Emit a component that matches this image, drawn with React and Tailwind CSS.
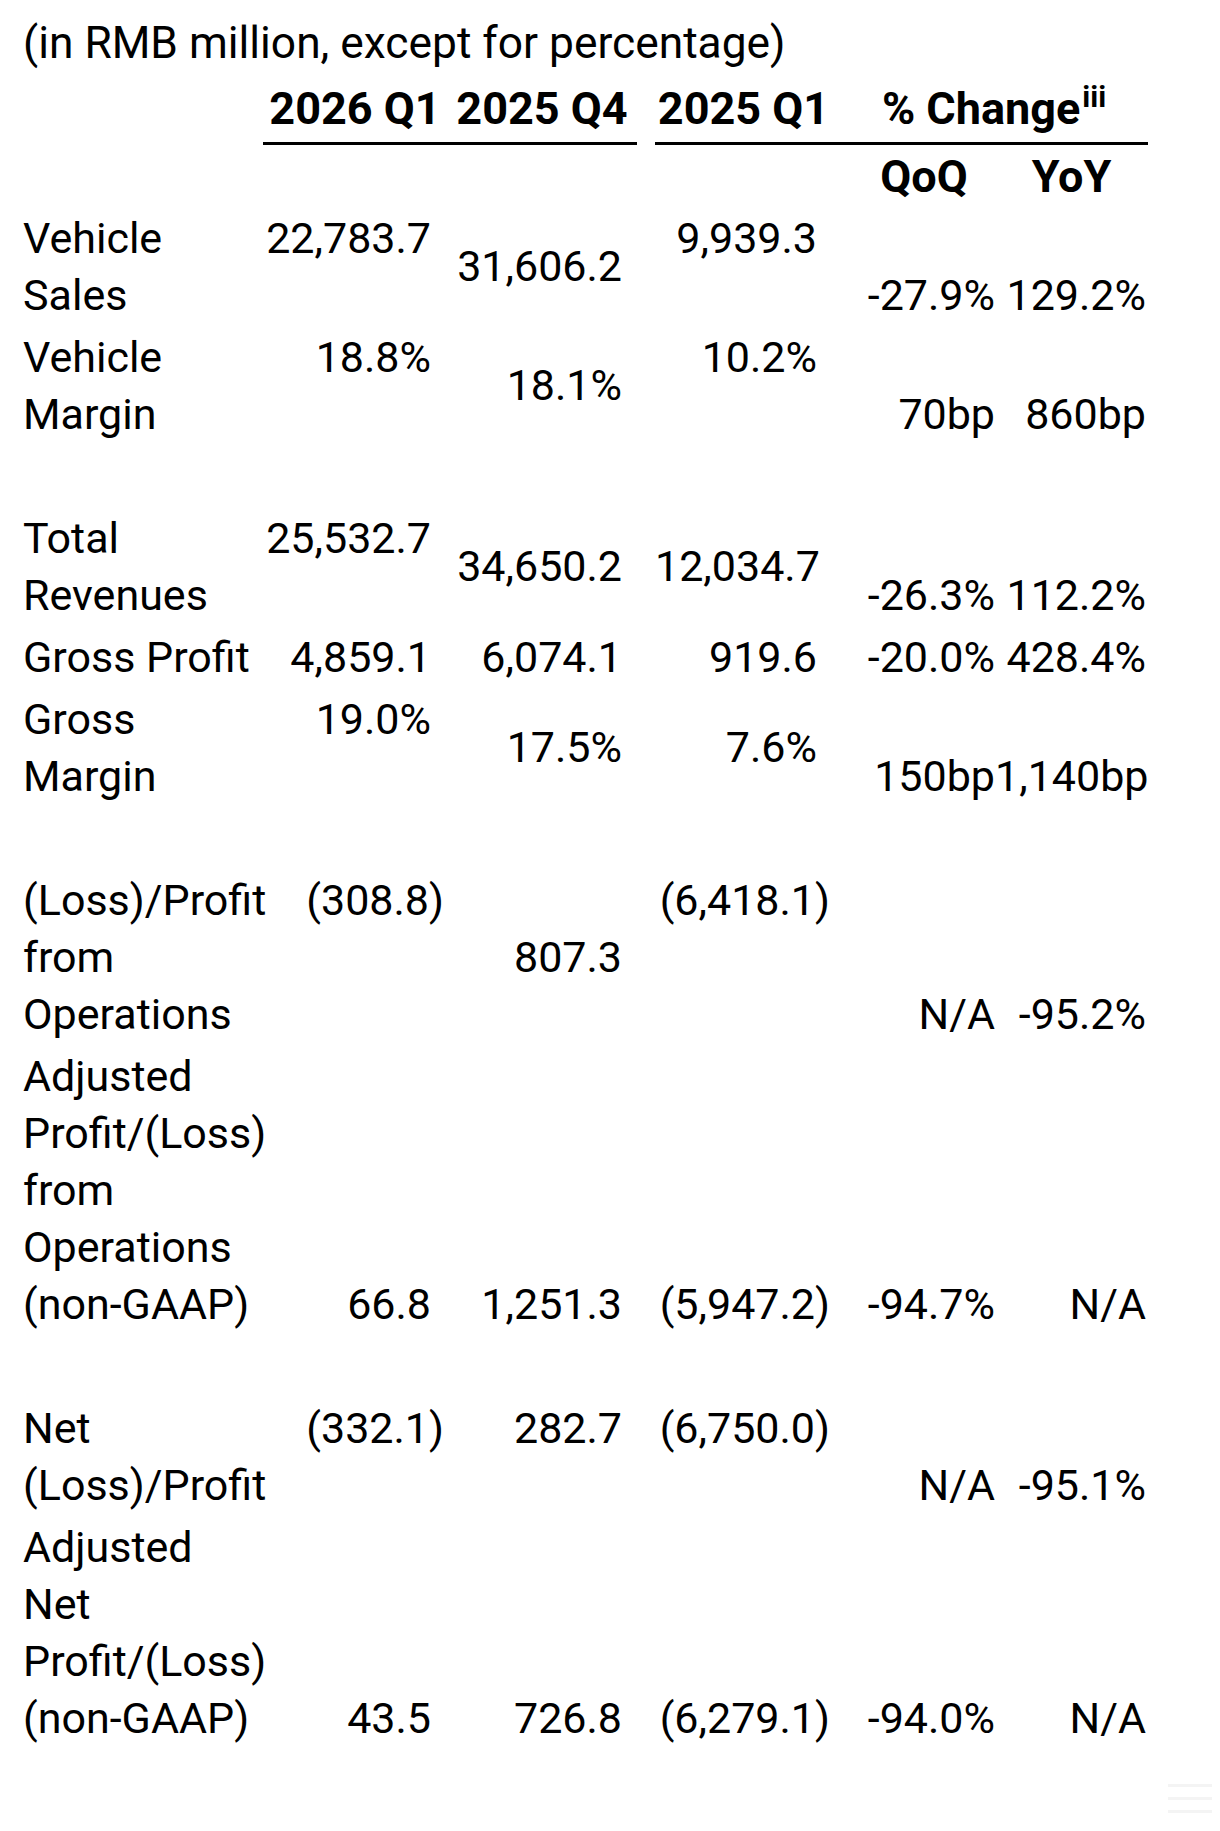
import React from "react";

const GRID = "grid grid-cols-[240px_184px_190px_18px_177px_163px_153px]";
const PADS = ["pr-[16px]", "pr-[15px]", "", "pr-[15px]", "pr-0", "pr-[2px]"];
const ALIGN = { t: "justify-start", m: "justify-center", b: "justify-end" };

function Val({ v }) {
  if (v.endsWith(")")) {
    return (
      <span>
        {v.slice(0, -1)}
        <span className="mr-[-13px]">)</span>
      </span>
    );
  }
  return <span>{v}</span>;
}

function Row({ label, cells }) {
  return (
    <div className={`${GRID} pt-[2.5px] pb-[2.5px] text-[43px] leading-[57px]`}>
      <div className="flex flex-col whitespace-nowrap">
        {label.map((l, i) => (
          <div key={i}>{l}</div>
        ))}
      </div>
      {[0, 1, 2, 3, 4, 5].map((ci) => {
        if (ci === 2) return <div key={ci} />;
        const idx = ci > 2 ? ci - 1 : ci;
        const c = cells[idx];
        return (
          <div
            key={ci}
            className={`flex flex-col text-right whitespace-nowrap ${PADS[ci]} ${ALIGN[c ? c[1] || "t" : "t"]}`}
          >
            {c ? <Val v={c[0]} /> : null}
          </div>
        );
      })}
    </div>
  );
}

function Blank() {
  return (
    <div className={`${GRID} pt-[2.5px] pb-[2.5px] text-[43px] leading-[57px]`}>
      <div>&nbsp;</div>
    </div>
  );
}

export default function App() {
  return (
    <div className="relative min-h-[1831px] w-[1220px] bg-white text-black font-[Roboto,sans-serif] pt-[15px] pl-[23px]">
      <div className="text-[44.3px] leading-[57px] whitespace-nowrap">
        (in RMB million, except for percentage)
      </div>

      <div className={`${GRID} mt-[8px] text-[45px] font-bold leading-[57px] whitespace-nowrap`}>
        <div />
        <div className="text-center pb-[0px] border-b-[3px] border-black">2026 Q1</div>
        <div className="text-center pb-[0px] border-b-[3px] border-black">2025 Q4</div>
        <div />
        <div className="text-center pb-[0px] border-b-[3px] border-black">2025 Q1</div>
        <div className="col-span-2 text-center pb-[0px] border-b-[3px] border-black pl-[8px]">
          % Change<span className="relative top-[-17px] text-[30px] ml-[2px]">iii</span>
        </div>
      </div>

      <div className={`${GRID} pt-[3px] pb-[2px] text-[45px] font-bold leading-[57px] whitespace-nowrap`}>
        <div />
        <div />
        <div />
        <div />
        <div />
        <div className="text-center pl-[21px]">QoQ</div>
        <div className="text-center">YoY</div>
      </div>

      <Row
        label={["Vehicle", "Sales"]}
        cells={[["22,783.7", "t"], ["31,606.2", "m"], ["9,939.3", "t"], ["-27.9%", "b"], ["129.2%", "b"]]}
      />
      <Row
        label={["Vehicle", "Margin"]}
        cells={[["18.8%", "t"], ["18.1%", "m"], ["10.2%", "t"], ["70bp", "b"], ["860bp", "b"]]}
      />
      <Blank />
      <Row
        label={["Total", "Revenues"]}
        cells={[["25,532.7", "t"], ["34,650.2", "m"], ["12,034.7", "m"], ["-26.3%", "b"], ["112.2%", "b"]]}
      />
      <Row
        label={["Gross Profit"]}
        cells={[["4,859.1", "t"], ["6,074.1", "t"], ["919.6", "t"], ["-20.0%", "t"], ["428.4%", "t"]]}
      />
      <Row
        label={["Gross", "Margin"]}
        cells={[["19.0%", "t"], ["17.5%", "m"], ["7.6%", "m"], ["150bp", "b"], ["1,140bp", "b"]]}
      />
      <Blank />
      <Row
        label={["(Loss)/Profit", "from", "Operations"]}
        cells={[["(308.8)", "t"], ["807.3", "m"], ["(6,418.1)", "t"], ["N/A", "b"], ["-95.2%", "b"]]}
      />
      <Row
        label={["Adjusted", "Profit/(Loss)", "from", "Operations", "(non-GAAP)"]}
        cells={[["66.8", "b"], ["1,251.3", "b"], ["(5,947.2)", "b"], ["-94.7%", "b"], ["N/A", "b"]]}
      />
      <Blank />
      <Row
        label={["Net", "(Loss)/Profit"]}
        cells={[["(332.1)", "t"], ["282.7", "t"], ["(6,750.0)", "t"], ["N/A", "b"], ["-95.1%", "b"]]}
      />
      <Row
        label={["Adjusted", "Net", "Profit/(Loss)", "(non-GAAP)"]}
        cells={[["43.5", "b"], ["726.8", "b"], ["(6,279.1)", "b"], ["-94.0%", "b"], ["N/A", "b"]]}
      />

      <div className="absolute left-[1168px] top-[1784px] w-[44px] flex flex-col gap-[10px] opacity-60">
        <div className="h-[3px] bg-[#eeeeee]" />
        <div className="h-[3px] bg-[#eeeeee]" />
        <div className="h-[3px] bg-[#eeeeee]" />
      </div>
    </div>
  );
}
